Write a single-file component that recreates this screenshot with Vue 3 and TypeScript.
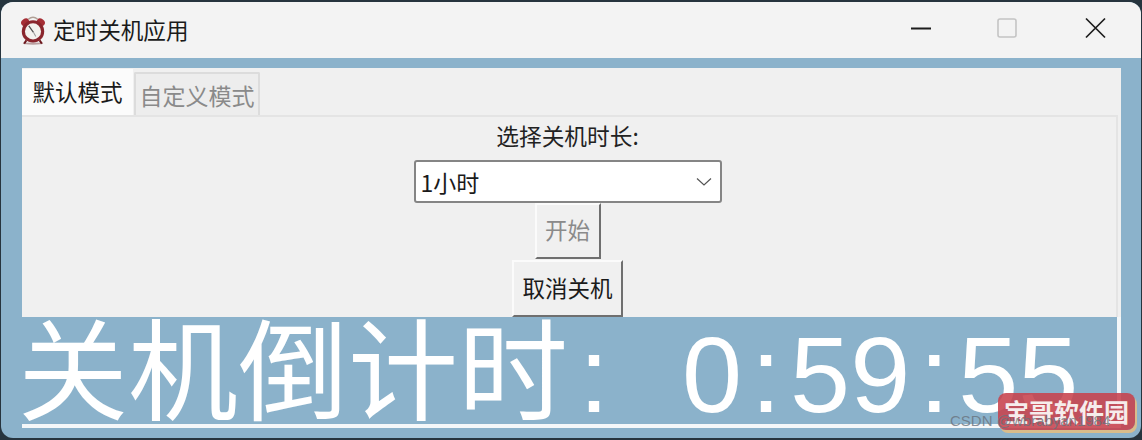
<script setup lang="ts">
import { computed, ref } from 'vue'

const tabs = ['默认模式', '自定义模式']
const activeTab = ref(0)
const duration = ref('1小时')
const countdown = ref('0:59:55')

const countdownParts = computed(() => countdown.value.split(''))
</script>

<template>
  <div class="window">
    <header class="titlebar">
      <svg class="app-icon" viewBox="0 0 30 32" width="28" height="30">
        <ellipse cx="15" cy="30.5" rx="11" ry="1.2" fill="#b9a0a0" />
        <path d="M10 4.5 Q15 0 20 4.5" fill="none" stroke="#b0a096" stroke-width="1.5" />
        <ellipse cx="6.5" cy="7.5" rx="4.6" ry="3.4" fill="#a52e35" transform="rotate(-38 6.5 7.5)" />
        <ellipse cx="23.5" cy="7.5" rx="4.6" ry="3.4" fill="#a52e35" transform="rotate(38 23.5 7.5)" />
        <path d="M8 27 L5.5 30.5 M22 27 L24.5 30.5" stroke="#6e1a20" stroke-width="2.2" />
        <circle cx="15" cy="17.5" r="12" fill="#8a262d" />
        <circle cx="15" cy="17.5" r="8.6" fill="#f3f2ee" />
        <path d="M10.5 11.5 L15.5 18.5" fill="none" stroke="#4d4d4d" stroke-width="1.3" />
        <path d="M15.5 18.5 L18 23" fill="none" stroke="#9a9a9a" stroke-width="1.1" />
      </svg>
      <span class="title">定时关机应用</span>
      <div class="controls">
        <svg class="control" viewBox="0 0 88 40" width="88" height="40">
          <path d="M36 20.5 H56" stroke="#1c1c1c" stroke-width="2" />
        </svg>
        <svg class="control" viewBox="0 0 88 40" width="88" height="40">
          <rect x="35" y="11" width="18" height="18" rx="2" fill="none" stroke="#c4c4c4" stroke-width="1.6" />
        </svg>
        <svg class="control" viewBox="0 0 88 40" width="88" height="40">
          <path d="M35 10.5 L54 29.5 M54 10.5 L35 29.5" stroke="#1c1c1c" stroke-width="1.7" />
        </svg>
      </div>
    </header>

    <main class="client">
      <div class="panel">
        <div class="tabs">
          <div
            v-for="(tab, index) in tabs"
            :key="tab"
            class="tab"
            :class="{ active: index === activeTab }"
          >
            {{ tab }}
          </div>
        </div>
        <section class="pane">
          <div class="label">选择关机时长:</div>
          <div class="combo">
            <span>{{ duration }}</span>
            <svg viewBox="0 0 16 10" width="16" height="10">
              <path d="M1 1.5 L8 8 L15 1.5" fill="none" stroke="#555" stroke-width="1.2" />
            </svg>
          </div>
          <button class="btn start" disabled>开始</button>
          <button class="btn cancel">取消关机</button>
        </section>
        <div class="timer">
          <span class="timer-label">关机倒计时</span>
          <span class="colon first">:</span>
          <span class="timer-value">
            <span
              v-for="(part, index) in countdownParts"
              :key="index"
              :class="{ colon: part === ':' }"
            >{{ part }}</span>
          </span>
        </div>
      </div>
    </main>

    <div class="stamp">宝哥软件园</div>
    <div class="credit">CSDN @wbrabyan1984</div>
  </div>
</template>

<style>
html,
body {
  margin: 0;
  background: #26343e;
}
</style>

<style scoped>
.window {
  position: relative;
  box-sizing: border-box;
  width: 1140px;
  height: 436px;
  margin: 2px 0 0 1px;
  display: flex;
  flex-direction: column;
  background: #8bb2cb;
  border-radius: 12px;
  overflow: hidden;
  font-family: 'Noto Sans CJK SC', 'Liberation Sans', sans-serif;
  color: #1a1a1a;
}

.titlebar {
  height: 56px;
  flex: none;
  display: flex;
  align-items: center;
  padding-left: 18px;
  background: #f3f3f3;
}

.app-icon {
  flex: none;
}

.title {
  margin-left: 6px;
  font-size: 22.6px;
  line-height: 1;
}

.controls {
  margin-left: auto;
  margin-bottom: 4px;
  padding-right: 2px;
  display: flex;
}

.control {
  display: block;
}

.client {
  flex: 1;
  padding: 10px 20px 0 21px;
  min-height: 0;
}

.panel {
  height: 360px;
  background: #f0f0f0;
  display: flex;
  flex-direction: column;
}

.tabs {
  height: 47px;
  flex: none;
  display: flex;
  align-items: flex-end;
}

.tab {
  box-sizing: border-box;
  font-size: 22.5px;
  line-height: 1;
  text-align: center;
}

.tab.active {
  width: 111px;
  height: 46px;
  padding-top: 11px;
  background: #fbfbfb;
}

.tab:not(.active) {
  width: 126px;
  height: 43px;
  margin-left: 1px;
  padding-top: 10px;
  color: #8a8a8a;
  background: #ededed;
  border: 2px solid #dcdcdc;
  border-bottom: none;
  border-radius: 2px 2px 0 0;
  font-size: 23px;
}

.pane {
  height: 202px;
  flex: none;
  box-sizing: border-box;
  margin-right: 3px;
  padding-right: 3px;
  border-top: 2px solid #e4e4e4;
  border-right: 2px solid #e4e4e4;
  display: flex;
  flex-direction: column;
  align-items: center;
}

.label {
  height: 43px;
  flex: none;
  padding-top: 5px;
  box-sizing: border-box;
  font-size: 22.7px;
  line-height: 28px;
  color: #222;
}

.combo {
  box-sizing: border-box;
  width: 308px;
  height: 43px;
  flex: none;
  display: flex;
  align-items: center;
  justify-content: space-between;
  padding: 0 8px 0 5px;
  background: #fff;
  border: 2px solid #858585;
  border-radius: 3px;
  font-size: 23px;
}

.btn {
  box-sizing: border-box;
  flex: none;
  padding: 0 0 3px;
  font-family: inherit;
  font-size: 22.5px;
  line-height: 1;
  background: #f0f0f0;
  border: 2px solid;
  border-color: #fbfbfb #6f6f6f #6f6f6f #fbfbfb;
  color: #1a1a1a;
}

.start {
  width: 66px;
  height: 56px;
  color: #8a8a8a;
}

.cancel {
  width: 111px;
  height: 57px;
  margin-top: 1px;
}

.timer {
  box-sizing: border-box;
  flex: none;
  height: 111px;
  background: #8bb2cb;
  border-right: 4px solid #f4f7f9;
  border-bottom: 4px solid #f4f7f9;
  color: #fff;
  font-size: 110px;
  line-height: 94px;
  white-space: nowrap;
  display: flex;
  align-items: baseline;
}

.timer-label {
  margin-left: -4px;
}

.timer-value {
  margin-left: 64px;
  font-family: 'Liberation Sans', sans-serif;
  font-size: 108px;
}

.colon {
  display: inline-block;
  width: 48px;
  text-align: center;
  font-family: 'Liberation Sans', sans-serif;
  font-size: 108px;
}

.colon.first {
  margin-left: 2px;
}

.stamp {
  position: absolute;
  left: 997px;
  top: 391px;
  width: 137px;
  height: 37px;
  border-radius: 8px;
  background: rgba(199, 66, 76, 0.88);
  box-shadow: 2px 3px 0 #d9bc8b;
  color: #f6ecec;
  font-weight: 700;
  font-size: 25px;
  line-height: 36px;
  text-align: center;
  white-space: nowrap;
}

.credit {
  position: absolute;
  left: 949px;
  top: 410px;
  font-family: 'Liberation Sans', sans-serif;
  font-size: 15px;
  line-height: 18px;
  color: rgba(105, 115, 125, 0.8);
  white-space: nowrap;
}
</style>
